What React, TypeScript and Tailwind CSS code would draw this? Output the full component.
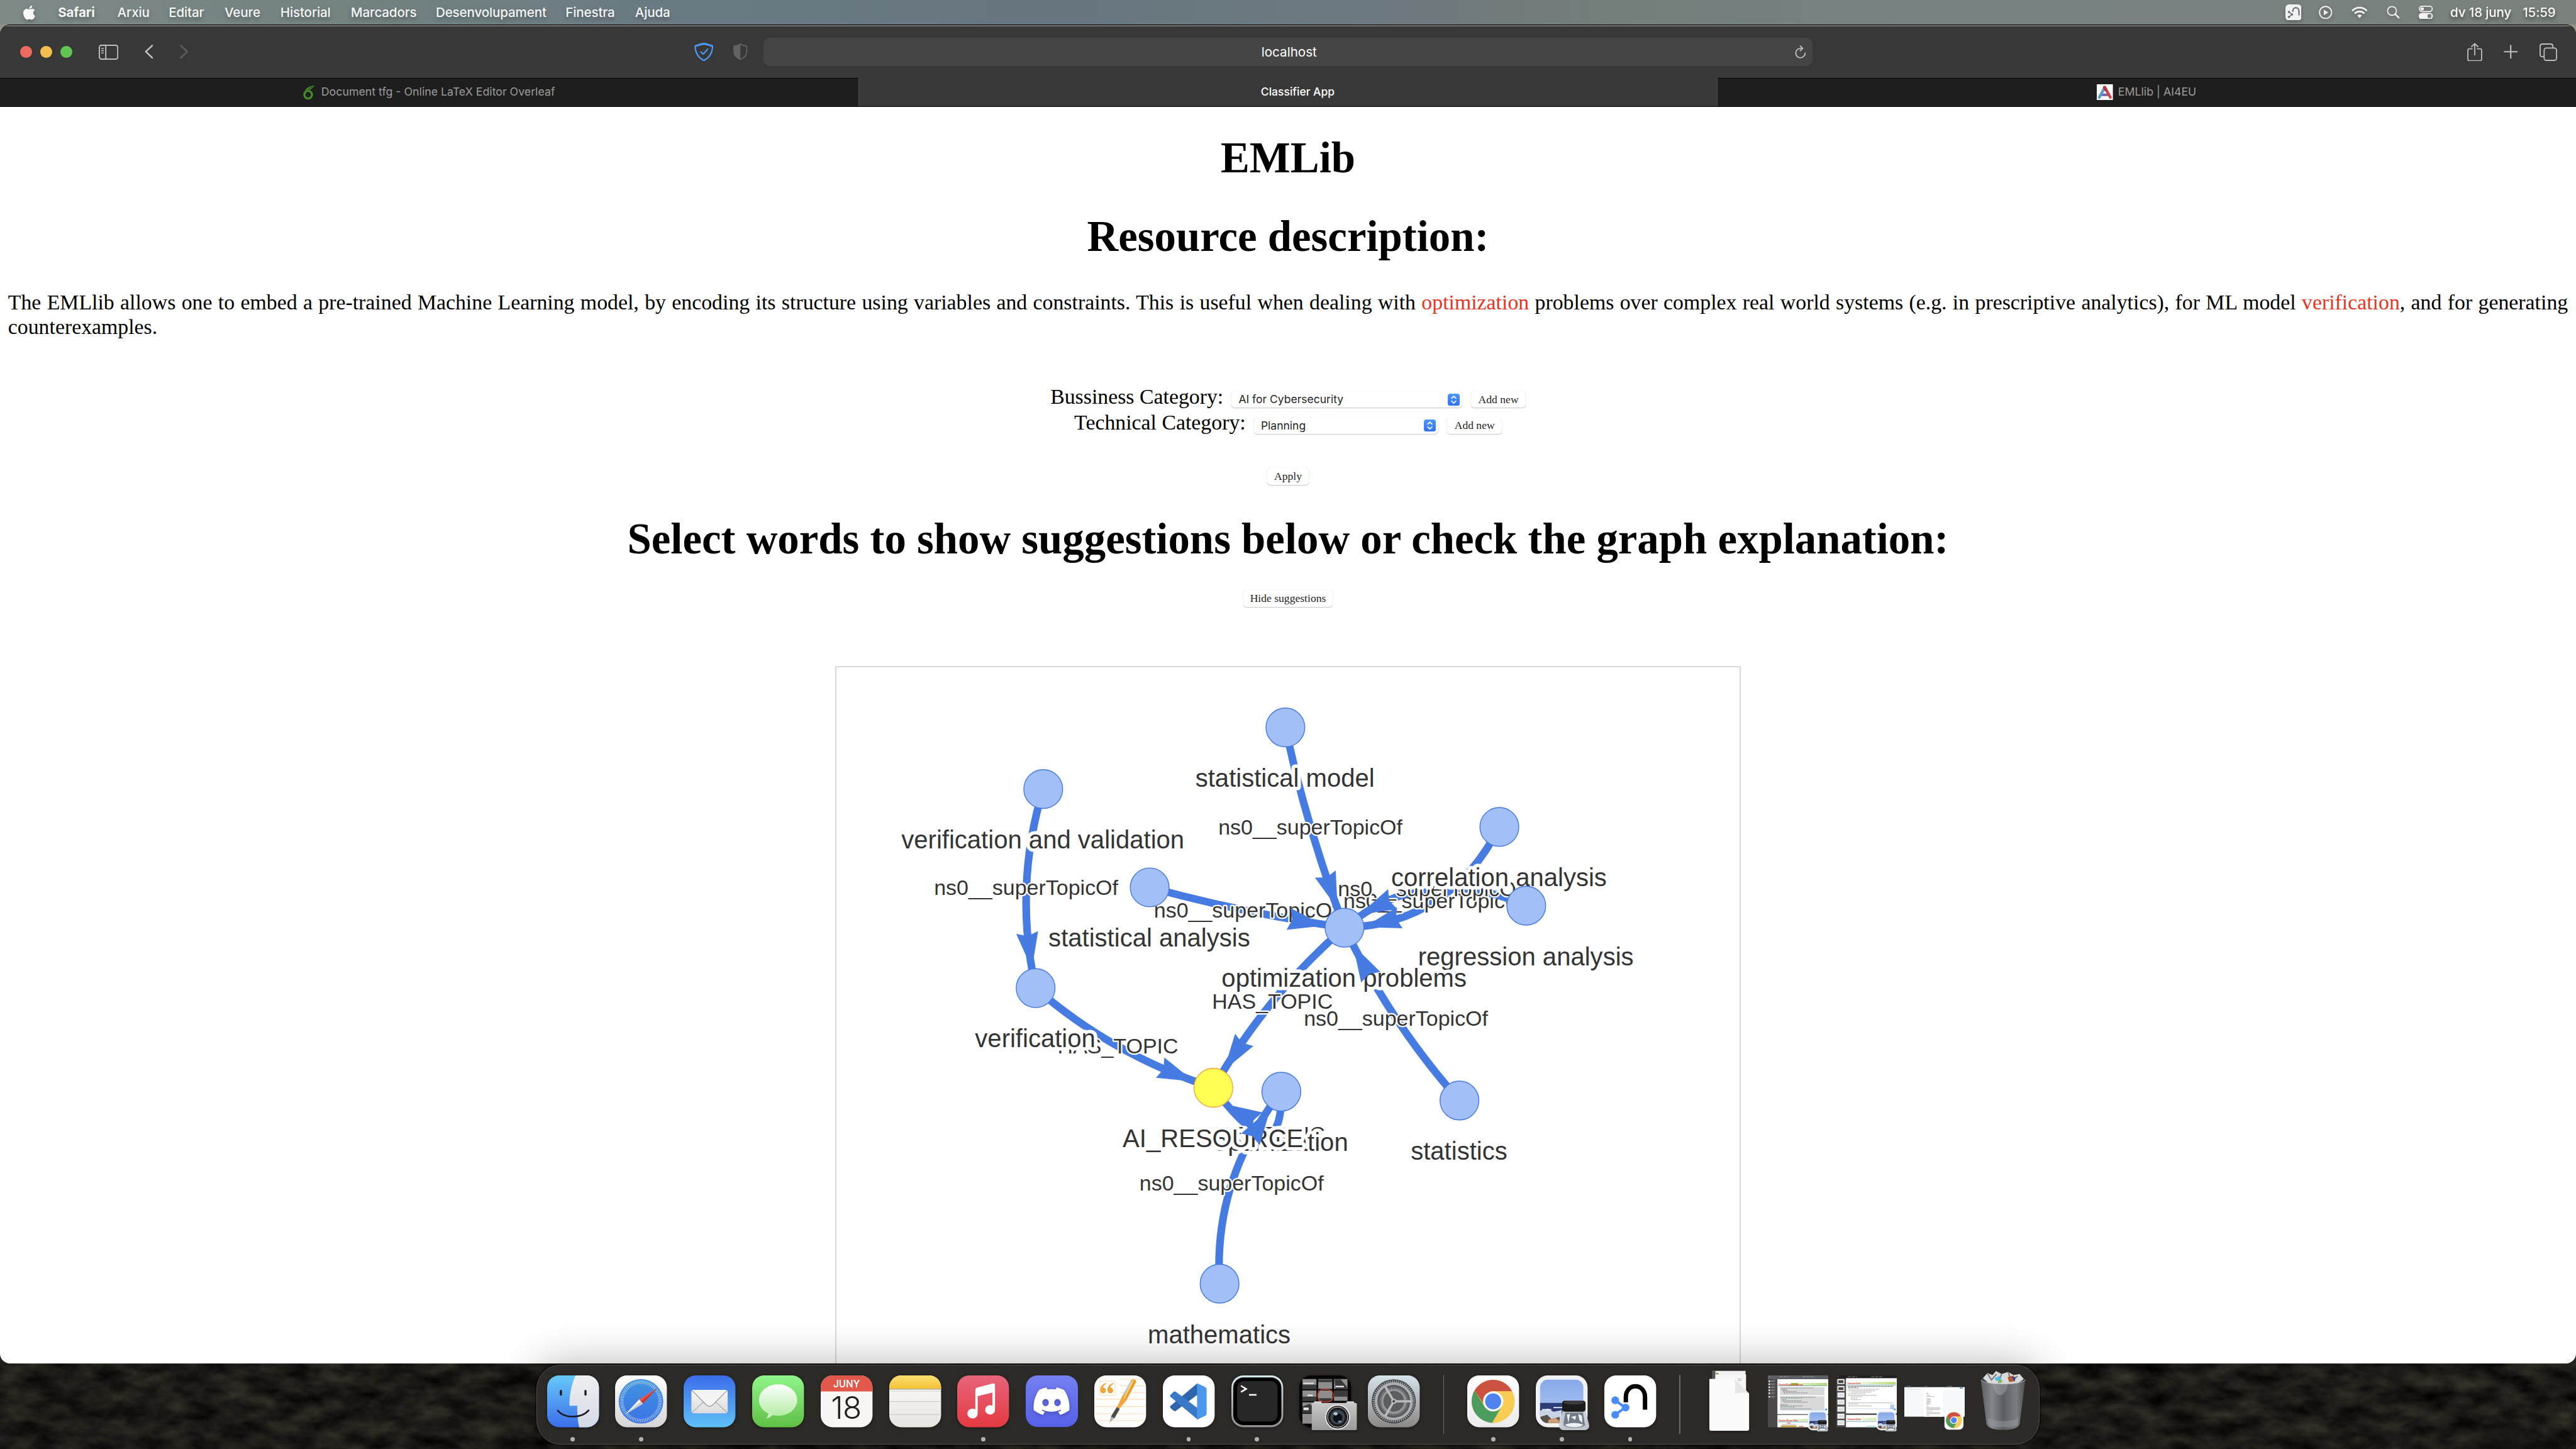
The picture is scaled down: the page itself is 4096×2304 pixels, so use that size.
import React from "react";
import { FaApple, FaDiscord } from "react-icons/fa";

/* ------------------------------------------------------------------ */
/* Menu bar                                                            */
/* ------------------------------------------------------------------ */

const MENUS = [
  { label: "Safari", cls: "w-[94.4px] font-bold" },
  { label: "Arxiu", cls: "w-[81.6px] font-medium" },
  { label: "Editar", cls: "w-[88.8px] font-medium" },
  { label: "Veure", cls: "w-[88.8px] font-medium" },
  { label: "Historial", cls: "w-[112px] font-medium" },
  { label: "Marcadors", cls: "w-[135.2px] font-medium" },
  { label: "Desenvolupament", cls: "w-[206.4px] font-medium" },
  { label: "Finestra", cls: "w-[110.4px] font-medium" },
  { label: "Ajuda", cls: "w-[80px] font-medium" },
];

function MenuBar() {
  return (
    <header className="flex h-[39px] shrink-0 items-center bg-[linear-gradient(90deg,#7f8a87_0%,#72827f_14%,#6b7b83_25%,#66757e_40%,#6d7a81_53%,#737a7b_59%,#727f7a_63%,#788283_75%,#7b827d_100%)] pl-[35.2px] text-[20.6px] leading-[38px] tracking-[-0.15px] text-white/95 [text-shadow:0_4px_6px_rgba(0,0,0,0.3)]">
      <FaApple className="mr-[34px] h-[26px] w-[23px] drop-shadow-[0_3px_3px_rgba(0,0,0,0.3)]" />
      {MENUS.map((m) => (
        <span key={m.label} className={"whitespace-nowrap " + m.cls}>
          {m.label}
        </span>
      ))}
      <div className="ml-auto flex items-center drop-shadow-[0_3px_3px_rgba(0,0,0,0.25)]">
        <svg viewBox="0 0 32 32" className="h-[25.6px] w-[25.6px]">
          <rect width="32" height="32" rx="7" fill="#f2f2f2" />
          <path d="M14.500 14 C14.500 4 27 4 27 14 V21" fill="none" stroke="#5f6b6b" strokeWidth="2.6" strokeLinecap="round" />
          <path d="M7 15 L13 20 L7 25" fill="none" stroke="#5f6b6b" strokeWidth="2" />
          <circle cx="7" cy="15" r="2.2" fill="#5f6b6b" />
          <circle cx="13" cy="20" r="2.2" fill="#5f6b6b" />
          <circle cx="7" cy="25" r="2.2" fill="#5f6b6b" />
        </svg>
        <svg viewBox="0 0 27 27" className="ml-[28px] h-[21.6px] w-[21.6px]">
          <circle cx="13.500" cy="13.500" r="12" fill="none" stroke="#f2f2f2" strokeWidth="2.4" />
          <path d="M10 8 L19 13.500 L10 19 Z" fill="#f2f2f2" />
        </svg>
        <svg viewBox="0 0 32 24" className="ml-[30.4px] h-[19.2px] w-[25.6px]" fill="none" stroke="#f2f2f2" strokeWidth="3.6">
          <path d="M1.500 9 C9 0.500 23 0.500 30.500 9" />
          <path d="M6.500 14.500 C11 9 21 9 25.500 14.500" />
          <path d="M11.500 18.500 C13.500 16 18.500 16 20.500 18.500 L16 23.500 Z" fill="#f2f2f2" stroke="none" />
        </svg>
        <svg viewBox="0 0 26 26" className="ml-[30.4px] h-[20.8px] w-[20.8px]" fill="none" stroke="#f2f2f2" strokeLinecap="round">
          <circle cx="10.500" cy="10.500" r="8.800" strokeWidth="2.200" />
          <path d="M17 17 L24 24" strokeWidth="3" />
        </svg>
        <svg viewBox="0 0 28 27" className="ml-[30.4px] h-[21.6px] w-[22.4px]">
          <rect x="1.200" y="1.200" width="25.600" height="10.400" rx="5.200" fill="none" stroke="#f2f2f2" strokeWidth="2.200" />
          <circle cx="6.800" cy="6.400" r="3.400" fill="#f2f2f2" />
          <rect x="0" y="14.500" width="28" height="12.500" rx="6.200" fill="#f2f2f2" />
          <circle cx="21.300" cy="20.700" r="4" fill="#737b76" />
        </svg>
        <span className="ml-[27.2px] w-[115.2px] whitespace-nowrap font-medium">dv 18 juny</span>
        <span className="w-[84.8px] whitespace-nowrap font-medium">15:59</span>
      </div>
    </header>
  );
}

/* ------------------------------------------------------------------ */
/* Browser chrome                                                      */
/* ------------------------------------------------------------------ */

function Toolbar() {
  return (
    <div className="flex h-[82px] shrink-0 items-center bg-[#383838] pr-[30.4px] pl-[32px]">
      <div className="flex gap-[12.8px]">
        <span className="h-[19.2px] w-[19.2px] rounded-full bg-[#ec6a5e]" />
        <span className="h-[19.2px] w-[19.2px] rounded-full bg-[#f4bf4f]" />
        <span className="h-[19.2px] w-[19.2px] rounded-full bg-[#61c554]" />
      </div>
      <svg viewBox="0 0 39 30" className="ml-[41.6px] h-[24px] w-[31.2px]" fill="none" stroke="#c0c0c0" strokeWidth="2.4">
        <rect x="1.200" y="1.200" width="36.600" height="27.600" rx="4" />
        <path d="M14 1 V29" />
        <path d="M5 7.500 H10 M5 12 H10 M5 16.500 H10" strokeWidth="2" />
      </svg>
      <svg viewBox="0 0 17 28" className="ml-[41.6px] h-[22.4px] w-[13.6px]" fill="none" stroke="#c6c6c6" strokeWidth="3" strokeLinecap="round" strokeLinejoin="round">
        <path d="M15.300 1.700 L2.300 14 L15.300 26.300" />
      </svg>
      <svg viewBox="0 0 17 28" className="ml-[42.4px] h-[22.4px] w-[13.6px]" fill="none" stroke="#606060" strokeWidth="3" strokeLinecap="round" strokeLinejoin="round">
        <path d="M1.700 1.700 L14.700 14 L1.700 26.300" />
      </svg>
      <svg viewBox="0 0 38 37" className="ml-[804.8px] h-[29.6px] w-[30.4px]" fill="none" stroke="#4b99f5" strokeWidth="2.800" strokeLinejoin="round" strokeLinecap="round">
        <path d="M1.800 6 C8 4.500 13 1.500 19 1.500 C25 1.500 30 4.500 36.200 6 C36.500 20 31 29 19 35.400 C7 29 1.500 20 1.800 6 Z" />
        <path d="M3 6.500 C9 5.500 13 2.500 19 2.500 C25 2.500 29 5.500 35 6.500" strokeWidth="3" />
        <path d="M13 18 L17.800 22.500 L26.500 12.500" strokeWidth="2.600" />
      </svg>
      <svg viewBox="0 0 28 33" className="ml-[32px] h-[26.4px] w-[22.4px]">
        <path d="M14 1.200 C10 4 5 5 1.300 5.500 V17 C1.300 24 7 29 14 31.800 C21 29 26.700 24 26.700 17 V5.500 C23 5 18 4 14 1.200 Z" fill="none" stroke="#626262" strokeWidth="2.200" />
        <path d="M14 1.200 C10 4 5 5 1.300 5.500 V17 C1.300 24 7 29 14 31.800 Z" fill="#626262" />
      </svg>
      <div className="ml-[25.8px] flex h-[44.8px] w-[1667.2px] items-center rounded-[10px] bg-[#454545]">
        <span className="w-[31px]" />
        <span className="flex-1 text-center text-[20.6px] leading-[44px] text-white">localhost</span>
        <svg viewBox="0 0 22 26" className="mr-[10px] h-[20.8px] w-[17.6px]" fill="none" stroke="#d0d0d0" strokeWidth="2" strokeLinecap="round">
          <path d="M20.300 15.500 A9.300 9.300 0 1 1 12.500 6.300" />
          <path d="M10.500 1.200 L15.500 6 L10.500 10.800" strokeLinejoin="round" />
        </svg>
      </div>
      <svg viewBox="0 0 30 37" className="ml-auto h-[29.6px] w-[24px]" fill="none" stroke="#bdbdbd" strokeWidth="2.300" strokeLinecap="round" strokeLinejoin="round">
        <path d="M10 12 H4.500 Q1.300 12 1.300 15 V32.500 Q1.300 35.700 4.500 35.700 H25.500 Q28.700 35.700 28.700 32.500 V15 Q28.700 12 25.500 12 H20" />
        <path d="M15 24 V1.800 M8.800 7.800 L15 1.600 L21.200 7.800" />
      </svg>
      <svg viewBox="0 0 28 28" className="ml-[33.6px] h-[22.4px] w-[22.4px]" stroke="#c0c0c0" strokeWidth="2.600" strokeLinecap="round">
        <path d="M14 1.500 V26.500 M1.500 14 H26.500" />
      </svg>
      <svg viewBox="0 0 35 35" className="ml-[34.4px] h-[28px] w-[28px]" fill="none" stroke="#bdbdbd" strokeWidth="2.300">
        <rect x="9.200" y="9.200" width="24.600" height="24.600" rx="4.500" />
        <path d="M9 26.500 H5.500 Q1.200 26.500 1.200 22.500 V5.500 Q1.200 1.200 5.500 1.200 H22.500 Q26.500 1.200 26.500 5.500 V9" />
      </svg>
    </div>
  );
}

function Tabs() {
  return (
    <div className="grid h-[45px] shrink-0 grid-cols-[1364.500px_1366px_1fr] text-[17.750px]">
      <div className="flex items-center justify-center border-t border-black bg-[#1e1e1e] text-[#9b9b9b]">
        <svg viewBox="0 0 25 29" className="mr-[8.800px] h-[23.2px] w-[20px]" fill="none" stroke="#46902c">
          <ellipse cx="10" cy="19.500" rx="7.600" ry="7.600" strokeWidth="4" />
          <path d="M3 16 C4 8 9 2 24 1.500 C19 3 19 8 12 10 C9 11 6 13 4.500 18 Z" fill="#46902c" stroke="none" />
          <path d="M7 12 C10 8 14 5.500 18 4.500" stroke="#1e1e1e" strokeWidth="1.200" />
        </svg>
        <span className="whitespace-nowrap">Document tfg - Online LaTeX Editor Overleaf</span>
      </div>
      <div className="flex items-center justify-center border-x border-[#4c4c4c] bg-[#383838] pl-[32px] text-[17.500px] font-medium text-white">
        Classifier App
      </div>
      <div className="flex items-center justify-center border-t border-black bg-[#1e1e1e] text-[#9b9b9b]">
        <svg viewBox="0 0 32 32" className="mr-[8px] h-[25.6px] w-[25.6px]" fill="none" strokeLinecap="round">
          <rect width="32" height="32" fill="#fff" />
          <path d="M6 21 H26" stroke="#6a62ad" strokeWidth="5" strokeLinecap="butt" />
          <path d="M16 6 L5 26" stroke="#5c97cc" strokeWidth="5.500" />
          <path d="M16 6 L27 26" stroke="#d8434a" strokeWidth="5.500" />
          <path d="M14.500 6 L18 12" stroke="#b5333f" strokeWidth="5" />
        </svg>
        <span className="whitespace-nowrap">EMLlib | AI4EU</span>
      </div>
    </div>
  );
}

/* ------------------------------------------------------------------ */
/* Web page                                                            */
/* ------------------------------------------------------------------ */

const CONTROL =
  "h-[26.4px] rounded-[5px] bg-white shadow-[0_0_1px_0px_rgba(0,0,0,0.2),0_1px_1.5px_0px_rgba(0,0,0,0.22)]";

function PushButton({ children, className }: { children: React.ReactNode; className: string }) {
  return (
    <button
      className={
        "flex shrink-0 items-center justify-center whitespace-nowrap font-['Liberation_Serif',serif] text-[17.6px] leading-[27px] text-[#262626] " +
        CONTROL +
        " " +
        className
      }
    >
      {children}
    </button>
  );
}

function PopUp({ value, className }: { value: string; className: string }) {
  return (
    <div className={"flex shrink-0 items-center justify-between pr-[3.6px] pl-[11.400px] font-['Inter',sans-serif] text-[17.500px] text-[#262626] " + CONTROL + " " + className}>
      <span className="leading-[26px]">{value}</span>
      <svg viewBox="0 0 24 24" className="h-[19.2px] w-[19.2px]">
        <defs>
          <linearGradient id="pop" x1="0" y1="0" x2="0" y2="1">
            <stop offset="0" stopColor="#4f95f8" />
            <stop offset="1" stopColor="#2f72f0" />
          </linearGradient>
        </defs>
        <rect width="24" height="24" rx="5" fill="url(#pop)" />
        <path d="M7.800 9.300 L12 5 L16.200 9.300 M7.800 14.700 L12 19 L16.200 14.700" fill="none" stroke="#fff" strokeWidth="2.200" strokeLinecap="round" strokeLinejoin="round" />
      </svg>
    </div>
  );
}

type Pt = [number, number];

const NODES: { name: string; at: Pt; main?: boolean }[] = [
  { name: "verification and validation", at: [2073.5, 1568.6] },
  { name: "statistical analysis", at: [2285.1, 1764] },
  { name: "statistical model", at: [2554.8, 1446] },
  { name: "correlation analysis", at: [2980.1, 1643.9] },
  { name: "regression analysis", at: [3033.5, 1800.5] },
  { name: "statistics", at: [2900.8, 2187.7] },
  { name: "mathematics", at: [2424, 2551.7] },
  { name: "verification", at: [2058.4, 1964.1] },
  { name: "optimization problems", at: [2672.3, 1844.1] },
  { name: "optimization", at: [2546.8, 2170] },
  { name: "AI_RESOURCE", at: [2411.7, 2162.3], main: true },
];

/* from / to are node indexes, mid is the curve's halfway point, tip and dir place the arrow head */
const EDGES: { from: number; to: number; label: string; mid: Pt; tip: Pt; dir: Pt }[] = [
  { from: 0, to: 7, label: "ns0__superTopicOf", mid: [2040, 1765], tip: [2051, 1926], dir: [0.129, 0.992] },
  { from: 1, to: 8, label: "ns0__superTopicOf", mid: [2477, 1810], tip: [2633, 1840], dir: [0.983, 0.18] },
  { from: 2, to: 8, label: "ns0__superTopicOf", mid: [2605, 1644.5], tip: [2658.5, 1806.3], dir: [0.333, 0.943] },
  { from: 3, to: 8, label: "ns0__superTopicOf", mid: [2853.5, 1791], tip: [2711.5, 1843], dir: [-0.966, 0.259] },
  { from: 4, to: 8, label: "ns0__superTopicOf", mid: [2842.6, 1767], tip: [2701.8, 1818], dir: [-0.908, 0.419] },
  { from: 5, to: 8, label: "ns0__superTopicOf", mid: [2775, 2024.5], tip: [2689.3, 1878.6], dir: [-0.482, -0.876] },
  { from: 8, to: 10, label: "HAS_TOPIC", mid: [2529.6, 1991], tip: [2432.5, 2127.8], dir: [-0.555, 0.832] },
  { from: 7, to: 10, label: "HAS_TOPIC", mid: [2222.5, 2080], tip: [2373.5, 2149.9], dir: [0.926, 0.378] },
  { from: 6, to: 9, label: "ns0__superTopicOf", mid: [2448.3, 2352], tip: [2524.9, 2203.4], dir: [0.542, -0.841] },
  { from: 9, to: 10, label: "HAS_TOPIC", mid: [2514, 2255], tip: [2434.5, 2194.5], dir: [-0.871, -0.491] },
];

const EDGE_COLOR = "#467be1";
const ARROW_LENGTH = 73;

function curve(from: Pt, mid: Pt, to: Pt) {
  const cx = 2 * mid[0] - (from[0] + to[0]) / 2;
  const cy = 2 * mid[1] - (from[1] + to[1]) / 2;
  return `M${from[0]} ${from[1]} Q${cx} ${cy} ${to[0]} ${to[1]}`;
}

function arrowHead(tip: Pt, dir: Pt) {
  const bx = tip[0] - dir[0] * ARROW_LENGTH;
  const by = tip[1] - dir[1] * ARROW_LENGTH;
  const nx = tip[0] - dir[0] * ARROW_LENGTH * 0.9;
  const ny = tip[1] - dir[1] * ARROW_LENGTH * 0.9;
  const w = ARROW_LENGTH * 0.3;
  return [
    [tip[0], tip[1]],
    [bx - dir[1] * w, by + dir[0] * w],
    [nx, ny],
    [bx + dir[1] * w, by - dir[0] * w],
  ]
    .map((p) => p.join(","))
    .join(" ");
}

function TopicGraph() {
  return (
    <svg
      viewBox="1662.500 1326.500 1795 1384"
      className="h-[1107.2px] w-[1436px] font-['Liberation_Sans',Arial,sans-serif]"
      textAnchor="middle"
    >
      {EDGES.map((e, i) => (
        <g key={i}>
          <path d={curve(NODES[e.from].at, e.mid, NODES[e.to].at)} fill="none" stroke={EDGE_COLOR} strokeWidth="15.200" />
          <text x={e.mid[0] - 0.5} y={e.mid[1] + 14.3} fontSize="42.500" fill="#343434" stroke="#fff" strokeWidth="5.500" strokeLinejoin="round" paintOrder="stroke">
            {e.label}
          </text>
        </g>
      ))}
      {NODES.map((n) => (
        <g key={n.name}>
          <circle cx={n.at[0]} cy={n.at[1]} r="38.600" fill={n.main ? "#ffff54" : "#a2c0f7"} stroke={n.main ? "#f1a63c" : "#467be1"} strokeWidth="1.800" />
          <text x={n.at[0] - 0.8} y={n.at[1] + 118} fontSize="50.100" fill="#343434" stroke="#fff" strokeWidth="14" strokeLinejoin="round" paintOrder="stroke">
            {n.name}
          </text>
        </g>
      ))}
      {EDGES.map((e, i) => (
        <polygon key={i} points={arrowHead(e.tip, e.dir)} fill={EDGE_COLOR} />
      ))}
    </svg>
  );
}

function WebPage() {
  return (
    <main className="flex min-h-0 flex-1 flex-col items-center overflow-hidden bg-white px-[12.8px] font-['Liberation_Serif','Times_New_Roman',serif] text-[33.800px] leading-[41.6px] text-black">
      <h1 className="mt-[41.300px] shrink-0 text-[68.800px] leading-[80px] font-bold">EMLib</h1>
      <h1 className="mt-[44.500px] shrink-0 text-[68.800px] leading-[80px] font-bold">Resource description:</h1>
      <p className="mt-[45px] w-full shrink-0 text-justify leading-[39.2px]">
        The EMLlib allows one to embed a pre-trained Machine Learning model, by encoding its structure using variables
        and constraints. This is useful when dealing with <span className="text-[#ea3323]">optimization</span> problems
        over complex real world systems (e.g. in prescriptive analytics), for ML model{" "}
        <span className="text-[#ea3323]">verification</span>, and for generating counterexamples.
      </p>
      <div className="mt-[70.500px] flex h-[41.6px] shrink-0 items-start">
        <label className="whitespace-nowrap">Bussiness Category:</label>
        <PopUp value="AI for Cybersecurity" className="mt-[12.3px] ml-[12.8px] w-[367px]" />
        <PushButton className="mt-[12.3px] ml-[14.4px] w-[86.400px]">Add new</PushButton>
      </div>
      <div className="flex h-[41.6px] shrink-0 items-start">
        <label className="whitespace-nowrap">Technical Category:</label>
        <PopUp value="Planning" className="mt-[12.3px] ml-[12.8px] w-[292.8px]" />
        <PushButton className="mt-[12.3px] ml-[15.200px] w-[86.400px]">Add new</PushButton>
      </div>
      <PushButton className="mt-[51.500px] w-[65.600px]">Apply</PushButton>
      <h1 className="mt-[46.100px] shrink-0 text-[68.800px] leading-[80px] font-bold whitespace-nowrap">
        Select words to show suggestions below or check the graph explanation:
      </h1>
      <PushButton className="mt-[41.900px] w-[142.400px]">Hide suggestions</PushButton>
      <div className="mt-[94.100px] w-[1440px] shrink-0 border-2 border-[#dadada]">
        <TopicGraph />
      </div>
    </main>
  );
}

/* ------------------------------------------------------------------ */
/* Dock icons                                                          */
/* ------------------------------------------------------------------ */

const TILE = "h-[82.400px] w-[82.400px]";

function Tile({ fill, children }: { fill: string; children?: React.ReactNode }) {
  return (
    <svg viewBox="0 0 100 100" className={TILE + " overflow-visible drop-shadow-[0_1px_2px_rgba(0,0,0,0.5)]"}>
      <rect width="100" height="100" rx="23" fill={fill} />
      {children}
    </svg>
  );
}

function Gradient({ id, from, to }: { id: string; from: string; to: string }) {
  return (
    <defs>
      <linearGradient id={id} x1="0" y1="0" x2="0" y2="1">
        <stop offset="0" stopColor={from} />
        <stop offset="1" stopColor={to} />
      </linearGradient>
    </defs>
  );
}

const Finder = () => (
  <Tile fill="url(#fi)">
    <Gradient id="fi" from="#67c9f8" to="#3b6eea" />
    <Gradient id="fi2" from="#f0eff1" to="#d3dae6" />
    <path d="M55 0 H77 A23 23 0 0 1 100 23 V77 A23 23 0 0 1 77 100 H62 C59 88 58 75 58 58.500 H43 C43 36 47 17 55 0 Z" fill="url(#fi2)" />
    <g fill="none" stroke="#15171c" strokeWidth="3.200" strokeLinecap="round">
      <path d="M26.500 30 V37" strokeWidth="4" />
      <path d="M74 30 V37" strokeWidth="4" />
      <path d="M20.500 68 C33 83.500 66 83.500 80 67.500" />
    </g>
  </Tile>
);

const SafariIcon = () => (
  <Tile fill="url(#sa)">
    <Gradient id="sa" from="#ffffff" to="#d5d5d5" />
    <Gradient id="sa2" from="#4295e0" to="#3a72e6" />
    <circle cx="50" cy="50" r="43" fill="url(#sa2)" />
    <circle cx="50" cy="50" r="37" fill="none" stroke="#dceafb" strokeWidth="7" strokeDasharray="1 2.229" opacity="0.9" />
    <path d="M81 25 L53.500 54.500 L46.500 46 Z" fill="#ea5545" />
    <path d="M81 25 L53.500 54.500 L50 50 Z" fill="#c9382f" />
    <path d="M20 75 L46.500 46 L53.500 54.500 Z" fill="#f4f4f4" />
    <path d="M20 75 L50 50 L53.500 54.500 Z" fill="#c9ccd2" />
  </Tile>
);

const Mail = () => (
  <Tile fill="url(#ma)">
    <Gradient id="ma" from="#3a6ce9" to="#5fc1f8" />
    <Gradient id="ma2" from="#f7f7f7" to="#dcdcdc" />
    <rect x="15" y="28" width="70" height="45" rx="4" fill="url(#ma2)" />
    <path d="M16 72 L38 51 M84 72 L62 51" stroke="#a5a5a5" strokeWidth="1.300" fill="none" />
    <path d="M16 29 L44 57 Q50 62 56 57 L84 29" stroke="#9c9c9c" strokeWidth="1.500" fill="#f4f4f4" />
  </Tile>
);

const Messages = () => (
  <Tile fill="url(#me)">
    <Gradient id="me" from="#90f58a" to="#5fbf45" />
    <Gradient id="me2" from="#ffffff" to="#b5eda5" />
    <ellipse cx="50" cy="47.500" rx="37" ry="30.500" fill="url(#me2)" />
    <path d="M32 70 C32 76 30 80 26 83 C33 82.500 38 79 40 75 Z" fill="#c9f0bd" />
  </Tile>
);

const Calendar = () => (
  <Tile fill="#f8f7f5">
    <path d="M0 31 V23 A23 23 0 0 1 23 0 H77 A23 23 0 0 1 100 23 V31 Z" fill="#e2594c" />
    <text x="50" y="23.500" textAnchor="middle" fontSize="18.500" fontWeight="600" fill="#fff" className="font-['Inter',sans-serif]">
      JUNY
    </text>
    <text x="49" y="84" textAnchor="middle" fontSize="60" fontWeight="300" fill="#1f1f1f" letterSpacing="-1" className="font-['Inter',sans-serif]">
      18
    </text>
  </Tile>
);

const Notes = () => (
  <Tile fill="url(#no)">
    <Gradient id="no" from="#fdfcfb" to="#e6e4df" />
    <Gradient id="no2" from="#fadf70" to="#f4c235" />
    <path d="M0 26 V23 A23 23 0 0 1 23 0 H77 A23 23 0 0 1 100 23 V26 Z" fill="url(#no2)" />
    <path d="M0 26.500 H100" stroke="#a8a49a" strokeWidth="1.500" />
    <path d="M2 30.500 H99" stroke="#b9b7b2" strokeWidth="1.800" strokeDasharray="1.600 1.800" />
    <path d="M0 50.500 H100 M0 75.500 H100" stroke="#cbcac6" strokeWidth="1.600" />
  </Tile>
);

const Music = () => (
  <Tile fill="url(#mu)">
    <Gradient id="mu" from="#e8657a" to="#e33a42" />
    <path d="M35 29 Q35 24.500 39 23.500 L69 15.500 Q73 15 73 19 V66 A9.500 9 0 1 1 68 58.500 V33 L39.500 40 V72 A10 9.500 0 1 1 35 65.500 Z" fill="#fff" />
  </Tile>
);

const Discord = () => (
  <div className={"flex items-center justify-center rounded-[19px] bg-[linear-gradient(180deg,#7480f0,#5661ea)] text-white " + TILE}>
    <FaDiscord className="h-[62px] w-[62px] drop-shadow-[0_2px_3px_rgba(0,0,0,0.25)]" />
  </div>
);

const Pages = () => (
  <Tile fill="#fdfdfd">
    <path d="M50 7 H90 M50 20 H97 M50 33 H99 M2 46 H99 M1 60 H99 M1 74 H99 M4 87 H96" stroke="#fbdcb2" strokeWidth="1.300" />
    <path d="M10 11 H40 V38 H10 Z" stroke="#f9d6a6" strokeWidth="1" fill="#fff" />
    <g fill="#eea43a">
      <path d="M23 14.500 C15 17 11.500 22 11.500 28 A5.500 5.500 0 1 0 17 23.500 C17 20 19 18 23 17 Z" />
      <path d="M37 14.500 C29 17 25.500 22 25.500 28 A5.500 5.500 0 1 0 31 23.500 C31 20 33 18 37 17 Z" />
    </g>
    <path d="M71 9 Q76 5.500 81.500 11 L61.500 49 L52 44 Z" fill="#eb9a2b" />
    <path d="M75 9 L57 45" stroke="#ffd98c" strokeWidth="2.500" />
    <path d="M71 12 L56 38" stroke="#b9d0dd" strokeWidth="2.500" />
    <path d="M52 44 L61.500 49 L47 66 L43.500 61.500 Z" fill="#f0a63c" />
    <path d="M43.500 61 L49 65 L38.500 83 L32 79.500 Z" fill="#4a4a4a" />
    <path d="M32 79 L38.500 82.500 L29.500 91.500 Z" fill="#a9b5bd" />
  </Tile>
);

const VSCode = () => (
  <Tile fill="#ffffff">
    <path d="M67 15 V37 L25 68.500 Q22.500 69.500 20.500 68 L14.500 62.500 Q13 60.500 15 58.500 Z" fill="#2f66ab" />
    <path d="M67 85 V63 L25 31.500 Q22.500 30.500 20.500 32 L14.500 37.500 Q13 39.500 15 41.500 Z" fill="#3a78c8" />
    <path d="M66 15.200 L81.500 22 Q84.500 23.500 84.500 27 V73 Q84.500 76.500 81.500 78 L66 85.500 Z" fill="#4b97ea" />
  </Tile>
);

const Terminal = () => (
  <Tile fill="url(#te)">
    <Gradient id="te" from="#d4e6ee" to="#8e8a8c" />
    <rect x="3.500" y="4" width="93" height="92" rx="20" fill="#000" />
    <rect x="11" y="11" width="78" height="78" rx="13" fill="#272727" />
    <path d="M18.500 20 L28.500 26 L18.500 32" stroke="#fff" strokeWidth="3" fill="none" />
    <path d="M34 37.500 H48.500" stroke="#fff" strokeWidth="3" />
  </Tile>
);

const ImageCapture = () => (
  <Tile fill="#050505">
    <g fill="#8d8d8d">
      <rect x="6" y="7" width="27" height="19" />
      <rect x="36.500" y="7" width="27" height="19" />
      <rect x="67" y="7" width="26" height="19" />
      <rect x="6" y="29" width="27" height="20" />
      <rect x="36.500" y="29" width="27" height="20" />
      <rect x="67" y="29" width="26" height="20" />
      <rect x="6" y="52" width="27" height="20" />
      <rect x="6" y="74" width="20" height="19" />
    </g>
    <g fill="#3a3a3a">
      <rect x="6" y="18" width="27" height="8" />
      <rect x="36.500" y="8" width="27" height="5" />
      <path d="M68 8 H80 L92 22 V26 H70 Z" />
      <rect x="6" y="41" width="27" height="8" />
      <rect x="36.500" y="44" width="27" height="5" />
      <rect x="67" y="29" width="26" height="12" />
      <path d="M6 60 L20 55 L33 66 V72 H6 Z" />
    </g>
    <g fill="#e4e4e4">
      <rect x="8" y="14" width="20" height="2.500" />
      <rect x="70" y="20" width="16" height="3" />
      <rect x="16" y="37" width="10" height="3" />
      <rect x="8" y="62" width="10" height="5" />
    </g>
    <rect x="35.500" y="27" width="30" height="24" rx="11" fill="none" stroke="#c5372b" strokeWidth="1.800" />
    <Gradient id="ca" from="#c9c9c9" to="#9a9a9a" />
    <rect x="28" y="50" width="15" height="5" rx="2" fill="#d5d5d5" />
    <rect x="91" y="50" width="15" height="5" rx="2" fill="#d5d5d5" />
    <rect x="24" y="53" width="87" height="52.500" rx="2" fill="url(#ca)" />
    <circle cx="74" cy="80.500" r="24" fill="#f1f1f1" />
    <circle cx="74" cy="80.500" r="22" fill="#1b1b1b" />
    <circle cx="74" cy="80.500" r="19.500" fill="none" stroke="#d8d8d8" strokeWidth="1.200" />
    <circle cx="74" cy="80.500" r="14" fill="#3b4754" />
    <circle cx="74" cy="82" r="9" fill="#0d1116" />
    <ellipse cx="70" cy="74" rx="4" ry="3" fill="#b5c6d5" />
    <ellipse cx="78" cy="89" rx="3.500" ry="2" fill="#7f93a6" />
  </Tile>
);

const Settings = () => (
  <Tile fill="url(#se)">
    <Gradient id="se" from="#d5e3ea" to="#8b8885" />
    <circle cx="50" cy="50" r="42.500" fill="#3a3d40" />
    <circle cx="50" cy="50" r="38.500" fill="none" stroke="#9b9ea0" strokeWidth="5" strokeDasharray="2.200 1.832" />
    <circle cx="50" cy="50" r="34" fill="none" stroke="#acb0b2" strokeWidth="5" />
    <circle cx="50" cy="50" r="31" fill="#5a5e61" />
    <circle cx="50" cy="50" r="25.500" fill="none" stroke="#84888a" strokeWidth="3.500" strokeDasharray="1.600 1.400" />
    <circle cx="50" cy="50" r="22" fill="none" stroke="#94989a" strokeWidth="4" />
    <g stroke="#b9bcbe" strokeWidth="4.500">
      <path d="M50 50 H83" />
      <path d="M50 50 L33.500 21.400" />
      <path d="M50 50 L33.500 78.600" />
    </g>
    <circle cx="50" cy="50" r="5" fill="#b9bcbe" />
    <circle cx="50" cy="50" r="2.300" fill="#3a3d40" />
  </Tile>
);

function ChromeArt() {
  return (
    <g>
      <circle cx="50" cy="50" r="41.500" fill="#f7cd55" />
      <path d="M14.060 29.250 A41.500 41.500 0 0 1 86.500 30.500 H50 L35 60 Z" fill="#cc5241" />
      <path d="M14.060 29.250 A41.500 41.500 0 0 0 50 91.500 L67 60 L50 65 L33.500 60 Z" fill="#4c9c5d" />
      <path d="M86.500 30.500 A41.500 41.500 0 0 1 48 91.500 L67.500 58 L66 41 L50 30.500 Z" fill="#f7cd55" />
      <circle cx="50" cy="50" r="19.500" fill="#fff" />
      <circle cx="50" cy="50" r="15.500" fill="#4f83ef" />
    </g>
  );
}

const Chrome = () => (
  <Tile fill="url(#ch)">
    <Gradient id="ch" from="#ffffff" to="#ececec" />
    <ChromeArt />
  </Tile>
);

function PreviewArt() {
  return (
    <g>
      <defs>
        <linearGradient id="sky" x1="0" y1="0" x2="0" y2="1">
          <stop offset="0" stopColor="#87a9e8" />
          <stop offset="1" stopColor="#b3ccf4" />
        </linearGradient>
        <clipPath id="photo">
          <rect x="8" y="8" width="84" height="84" rx="16" />
        </clipPath>
      </defs>
      <g clipPath="url(#photo)">
        <rect x="8" y="8" width="84" height="84" fill="url(#sky)" />
        <rect x="8" y="53" width="84" height="39" fill="#2e3c78" />
        <path d="M8 68 L24 64 L34 70 L50 67 V92 H8 Z" fill="#c9d3e6" />
        <path d="M8 80 L22 76 L30 84 L46 80 V92 H8 Z" fill="#5b5048" />
        <path d="M24 86 L38 82 L46 88 V92 H24 Z" fill="#cf9f73" />
        <path d="M12 66 H30 M34 62 H52" stroke="#e8eef8" strokeWidth="2" />
      </g>
      <path d="M52 68 H96 L103 96 Q104 104 96 105.500 H52 Q44 104 45 96 Z" fill="#c7cdd3" opacity="0.95" />
      <path d="M57 72 H91 L95 96 Q90 101 74 101 Q58 101 53 96 Z" fill="#737c86" />
      <path d="M60 76 L66 74 L63 92 Z M82 74 L89 78 L90 92 L84 86 Z M68 80 L78 78 L76 86 Z M56 95 Q74 88 92 95 Q88 100 74 100 Q60 100 56 95 Z" fill="#eef1f4" />
      <rect x="51" y="49" width="45" height="21" rx="5" fill="#1b1b1c" />
      <ellipse cx="73.500" cy="52.500" rx="20" ry="3.500" fill="#3c3c3e" />
    </g>
  );
}

const Preview = () => (
  <Tile fill="#f1f1f3">
    <PreviewArt />
  </Tile>
);

const Neo4j = () => (
  <Tile fill="#ffffff">
    <path d="M41.500 52 V42 C41.500 14 78.500 14 78.500 42 V66" fill="none" stroke="#000" strokeWidth="8.500" />
    <path d="M21 48 L40 62 L21 76" fill="none" stroke="#4a8cf7" strokeWidth="5" />
    <g fill="#4a8cf7">
      <circle cx="21" cy="48" r="7.500" />
      <circle cx="41" cy="62" r="7.500" />
      <circle cx="21" cy="76" r="7.500" />
    </g>
  </Tile>
);

const Document = () => (
  <svg viewBox="0 0 79 120" className="mt-[-8px] h-[96px] w-[63.200px] drop-shadow-[0_1px_2px_rgba(0,0,0,0.4)]">
    <path d="M6 1 H72 V42 H6 Z" fill="#efefef" />
    <rect x="6" y="1" width="6" height="17" fill="#555" />
    <rect x="13" y="5" width="5" height="3" fill="#6f9f3a" />
    <path d="M12 8 H73 V42 H12 Z" fill="#f6f6f6" />
    <path d="M0 17 H50 L79 46 V116 Q79 120 75 120 H3 Q0 120 0 116 Z" fill="#fbfbfb" />
    <path d="M56 17 h8 M57 20 h7" stroke="#aaa" strokeWidth="1.200" />
    <path d="M50 17 C52 28 52 38 50 46 C62 44 71 44 79 46 Z" fill="#e6e6e6" />
  </svg>
);

function Slide({ title, mark, dark }: { title: string; mark?: boolean; dark?: boolean }) {
  return (
    <svg viewBox="0 0 120 103" className="h-[82.400px] w-[96px] overflow-visible font-['Open_Sans',sans-serif]">
      <rect width="120" height="103" fill="#4a4a4b" />
      <rect width="120" height="7.500" fill={dark ? "#202021" : "#5c5f63"} />
      <circle cx="3" cy="2.500" r="0.900" fill="#ec6a5e" />
      <path d="M23 2.500 h18 M69 2.500 h24" stroke="#b5b5b5" strokeWidth="0.800" strokeDasharray="6 2" />
      <rect x="19" y={dark ? 5.500 : 7.500} width="101" height={dark ? 70 : 69.500} fill="#fff" />
      <rect x="19" y="78.500" width="101" height="24.500" fill="#fff" />
      {dark
        ? [8, 22, 35, 49, 63, 77, 90].map((y, i) => (
            <g key={y}>
              <rect x="2" y={y - 1} width="14" height="10" fill="#f4f4f4" />
              <rect x="4" y={y + 1.500} width="10" height="5.500" fill={i < 2 ? "#46443c" : "#d9dfe0"} />
            </g>
          ))
        : [10, 16, 22, 28, 34, 41].map((y) => (
            <g key={y}>
              <rect x="1.500" y={y} width="3" height="3" fill="#f0f0f0" />
              <path d={`M6 ${y + 0.700} h9 M6 ${y + 2.500} h7`} stroke="#a5a5a5" strokeWidth="0.800" />
            </g>
          ))}
      <linearGradient id={dark ? "gd" : "gl"}>
        <stop offset="0" stopColor="#fff" />
        <stop offset="1" stopColor="#b4d977" />
      </linearGradient>
      <rect x="22" y={dark ? 13 : 15} width="96" height="5" fill={dark ? "url(#gd)" : "url(#gl)"} />
      <rect x="22" y={dark ? 84.500 : 86.500} width="96" height="5" fill={dark ? "url(#gd)" : "url(#gl)"} />
      <path d={dark ? "M20 19.500 H118 M20 91.500 H118" : "M20 20.500 H118 M20 92.500 H118"} stroke="#5a97b4" strokeWidth="1" />
      {mark && <rect x="45.500" y="15" width="15" height="5" fill="#a2b93a" />}
      <text x="21.500" y={dark ? 17.800 : 19.500} fontSize="4.200" fontWeight="700" fill="#dd2f2a">
        {title}
      </text>
      <text x="21.500" y={dark ? 89.300 : 91.500} fontSize="4.200" fontWeight="700" fill="#dd2f2a">
        {dark ? title : "Puzzle 2D por files"}
      </text>
      {dark ? (
        <g>
          <path d="M23 21.800 h90 M23 24.500 h20" stroke="#444" strokeWidth="1" strokeDasharray="5 1" />
          <path d="M25 27.500 h60 M25 30.500 h52 M29 33.300 h40 M25 36.300 h32 M25 39.500 h55 M29 42.300 h22 M29 45 h12 M29 48 h20 M25 54.500 h88 M25 57 h18 M25 60.500 h45" stroke="#8d8d8d" strokeWidth="0.900" strokeDasharray="4 0.800" />
          <path d="M23 27.500 h1.500 M23 30.500 h1.500 M23 36.300 h1.500 M23 39.500 h1.500 M23 54.500 h1.500 M23 60.500 h1.500" stroke="#8dbd4a" strokeWidth="1.400" />
          <rect x="107" y="58" width="8" height="9" fill="#b0cdf0" />
          <path d="M22 66.300 h92" stroke="#7fb4df" strokeWidth="0.600" />
          <rect x="60" y="100" width="18" height="3" fill="#b8e0ee" />
        </g>
      ) : (
        <g>
          <rect x="24" y="23.500" width="88.500" height="16" fill="#d9d9d9" />
          <rect x="24" y="41.500" width="88.500" height="27" fill="#d9d9d9" />
          <path d="M25 25 h66 M27 27.500 h11 M28 29.500 h12 M30 32 h28 M31 34.800 h48 M25 43.300 h70 M28 48 h8 M28 50.500 h38 M31 53 h48 M25 58.500 h14 M25 60.800 h45 M25 66.500 h62" stroke="#6b6b74" strokeWidth="0.900" strokeDasharray="4 0.900" />
          <path d="M27 45.300 h40 M25 63 h30" stroke="#5aa673" strokeWidth="0.900" strokeDasharray="5 1" />
          <path d="M22 69 h95" stroke="#7fb4df" strokeWidth="0.600" />
          <path d="M28 98 h28" stroke="#444" strokeWidth="0.500" />
          <path d="M38 95 h7 M61 101.500 h10" stroke="#dd2f2a" strokeWidth="1.200" />
          <rect x="26" y="99.500" width="31" height="3.500" fill="#c69c3b" />
        </g>
      )}
      <circle cx="116" cy="67.500" r="2" fill="#3f8fd0" />
      <svg x="79.500" y="70" width="39" height="39" viewBox="0 0 100 100" overflow="visible">
        <rect width="100" height="100" rx="23" fill="#f1f1f3" />
        <PreviewArt />
      </svg>
    </svg>
  );
}

const DocsWindow = () => (
  <svg viewBox="0 0 120 103" className="h-[82.400px] w-[96px] overflow-visible">
    <rect y="20" width="120" height="62" fill="#f6f8fa" />
    <rect y="20" width="120" height="3.500" fill="#26292e" />
    <path d="M5 21.500 h8 M40 21.500 h6 M85 21.500 h10" stroke="#9a9ca0" strokeWidth="0.700" />
    <rect y="23.500" width="120" height="5.500" fill="#fff" />
    <rect x="110" y="24.300" width="6" height="1.800" fill="#3a72e6" />
    <path d="M5 25 h9 M3 27.500 h30" stroke="#9a9ca0" strokeWidth="0.600" strokeDasharray="2 0.700" />
    <rect x="38.500" y="30" width="38" height="52" fill="#fff" />
    <path d="M44 35 h3 M44 37 h5 M44 40 h8 M44 42 h16 M44 46 h8 M44 48 h9 M44 50 h8 M44 52 h9 M44 54 h7 M44 56 h9 M44 58 h5 M44 62 h4 M44 64 h27 M44 66 h28 M44 68 h26 M44 71 h12 M44 74 h27 M44 76 h28 M44 79 h6" stroke="#8b8b8b" strokeWidth="0.700" />
    <svg x="79.500" y="70" width="38" height="38" viewBox="0 0 100 100">
      <rect width="100" height="100" rx="23" fill="#fbfbfb" />
      <ChromeArt />
    </svg>
  </svg>
);

const Trash = () => (
  <svg viewBox="0 0 90 118" className="mt-[-6.400px] h-[94.400px] w-[72px]">
    <defs>
      <linearGradient id="tr">
        <stop offset="0" stopColor="#5d6063" />
        <stop offset="0.250" stopColor="#85888b" />
        <stop offset="0.500" stopColor="#5a5e62" />
        <stop offset="0.800" stopColor="#7b7e81" />
        <stop offset="1" stopColor="#4d5053" />
      </linearGradient>
    </defs>
    <ellipse cx="45" cy="17" rx="44" ry="10" fill="#3d4043" />
    <path d="M5 14 L14 4 L24 8 L31 0 L42 6 L55 2 L66 8 L78 6 L86 16 L70 28 L20 28 Z" fill="#d9d9d9" />
    <path d="M14 5 L22 18 L32 6 M42 6 L36 24 M55 2 L62 20 L74 10" stroke="#77787a" strokeWidth="2.500" fill="none" />
    <path d="M28 14 L38 10 L42 17 L32 20 Z" fill="#4cbbe6" />
    <path d="M54 12 L66 9 L68 20 L57 22 Z" fill="#b8572c" />
    <path d="M62 12 L70 12 L68 22 Z" fill="#2f4f9e" />
    <path d="M36 18 h7 v5 h-8 Z" fill="#7bbd4a" />
    <path d="M1 18 C14 29 76 29 89 18 L78 105 C76 113 64 117 45 117 C26 117 14 113 12 105 Z" fill="url(#tr)" />
    <path d="M1 18 C14 29 76 29 89 18" fill="none" stroke="#a4a7aa" strokeWidth="1.300" />
    <path d="M15 92 C24 102 66 102 76 92 L74 106 C66 114 24 114 16 106 Z" fill="#9ea2a5" opacity="0.450" />
    <path d="M24 27 C28 44 34 52 45 46 C52 40 54 32 54 27 Z" fill="#a3a6a9" opacity="0.500" />
  </svg>
);

function Slot({ children, running }: { children: React.ReactNode; running?: boolean }) {
  return (
    <div className="flex w-[108.8px] flex-col items-center pt-[16px]">
      <div className="flex h-[98.500px] items-start justify-center">{children}</div>
      {running && <span className="h-[6.800px] w-[6.800px] rounded-full bg-[#b3b1ae]" />}
    </div>
  );
}

function DockDivider() {
  return (
    <div className="flex w-[49.200px] justify-center pt-[15px]">
      <span className="h-[94.400px] w-[1.600px] bg-[#6b6966]" />
    </div>
  );
}

function Dock() {
  return (
    <nav className="relative flex h-[127px] rounded-[38px] border-[1.600px] border-[#50504c] bg-[#2c2a26] px-[2.500px] shadow-[0_0_2px_1px_rgba(0,0,0,0.8),0_0_64px_4px_rgba(0,0,0,0.27)]">
      <Slot running><Finder /></Slot>
      <Slot running><SafariIcon /></Slot>
      <Slot><Mail /></Slot>
      <Slot><Messages /></Slot>
      <Slot><Calendar /></Slot>
      <Slot><Notes /></Slot>
      <Slot running><Music /></Slot>
      <Slot><Discord /></Slot>
      <Slot><Pages /></Slot>
      <Slot running><VSCode /></Slot>
      <Slot running><Terminal /></Slot>
      <Slot><ImageCapture /></Slot>
      <Slot><Settings /></Slot>
      <DockDivider />
      <Slot running><Chrome /></Slot>
      <Slot running><Preview /></Slot>
      <Slot running><Neo4j /></Slot>
      <DockDivider />
      <Slot><Document /></Slot>
      <Slot><Slide title="Puzzle2D por columnas" mark /></Slot>
      <Slot><Slide title="Texture Unit" dark /></Slot>
      <Slot><DocsWindow /></Slot>
      <Slot><Trash /></Slot>
    </nav>
  );
}

/* Dark rocky ground seen below the window */
function Ground() {
  return (
    <svg className="absolute inset-x-0 bottom-0 h-[170px] w-full" preserveAspectRatio="none">
      <filter id="rock" x="0" y="0" width="100%" height="100%" colorInterpolationFilters="sRGB">
        <feTurbulence type="fractalNoise" baseFrequency="0.02 0.04" numOctaves="5" seed="7" />
        <feColorMatrix values="0.26 0 0 0 -0.022  0.25 0 0 0 -0.022  0.21 0 0 0 -0.02  0 0 0 0 1" />
      </filter>
      <rect width="100%" height="100%" filter="url(#rock)" />
    </svg>
  );
}

export default function App() {
  return (
    <div className="relative flex h-[2304px] w-[4096px] flex-col overflow-hidden bg-[#1a1916] font-['Inter','Liberation_Sans',sans-serif]">
      <Ground />
      <MenuBar />
      <div className="relative h-[2129px] shrink-0 bg-[linear-gradient(180deg,#8f928a_0,#8f928a_60px,transparent_60px)]">
        <div className="flex h-full flex-col overflow-hidden rounded-[16px] border-t border-black bg-[#383838]">
          <div className="h-[1.600px] shrink-0 bg-[#757575]" />
          <Toolbar />
          <Tabs />
          <div className="h-[1.400px] shrink-0 bg-black" />
          <WebPage />
        </div>
      </div>
      <div className="flex justify-center pt-[1.600px]">
        <Dock />
      </div>
    </div>
  );
}
